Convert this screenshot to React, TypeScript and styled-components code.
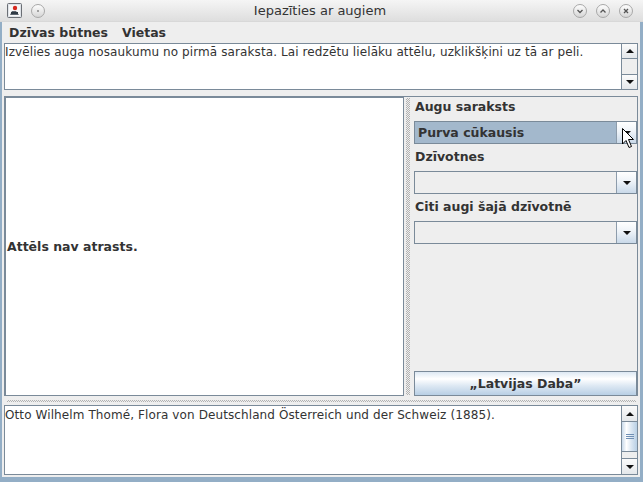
import React from "react";
import styled, { createGlobalStyle, css } from "styled-components";

const GlobalStyle = createGlobalStyle`
  html, body {
    margin: 0;
    padding: 0;
    background: #eeeeee;
  }
  body {
    font-family: "DejaVu Sans", "Liberation Sans", sans-serif;
    color: #333333;
  }
  * {
    box-sizing: border-box;
  }
`;

const Window = styled.div`
  position: relative;
  width: 643px;
  height: 482px;
  display: flex;
  flex-direction: column;
  overflow: hidden;
  background: #eeeeee;
`;

/* ---------- title bar ---------- */

const TitleBar = styled.div`
  flex: none;
  height: 22px;
  display: grid;
  grid-template-columns: 1fr auto 1fr;
  align-items: center;
  padding: 0 10px 0 7px;
  background: linear-gradient(#f5f5f5, #dedede);
  border-bottom: 1px solid #d8d8d8;
`;

const TitleGroup = styled.div<{ $end?: boolean }>`
  display: flex;
  align-items: center;
  gap: 9px;
  justify-content: ${(p) => (p.$end ? "flex-end" : "flex-start")};
`;

const Title = styled.div`
  font-size: 13px;
  color: #333333;
  white-space: nowrap;
`;

const RoundButton = styled.div`
  width: 14px;
  height: 14px;
  border-radius: 50%;
  border: 1px solid #a8a8a8;
  background: linear-gradient(#fdfdfd, #d6d6d6);
  display: grid;
  place-items: center;

  svg {
    display: block;
  }
`;

/* ---------- window body ---------- */

const Frame = styled.div`
  flex: 1;
  display: flex;
  flex-direction: column;
  padding: 0 2px 2px 2px;
  border-left: 2px solid #93aec6;
  border-right: 3px solid #93aec6;
  border-bottom: 5px solid #93aec6;
`;

const MenuBar = styled.div`
  flex: none;
  height: 21px;
  margin: 0 -2px;
  display: flex;
  align-items: center;
`;

const MenuItem = styled.div`
  padding: 0 7px;
  font-size: 12.5px;
  font-weight: bold;
  color: #333333;
`;

const ScrollPane = styled.div<{ $h: number; $gap?: number }>`
  flex: none;
  height: ${(p) => p.$h}px;
  margin-bottom: ${(p) => p.$gap ?? 0}px;
  display: flex;
  border: 1px solid #7a8a99;
  background: #ffffff;
`;

const TextArea = styled.div<{ $top: number }>`
  flex: 1;
  padding-top: ${(p) => p.$top}px;
  font-size: 12px;
  line-height: 15px;
  letter-spacing: 0.1px;
  color: #333333;
  white-space: nowrap;
  overflow: hidden;
`;

const ScrollBar = styled.div`
  width: 16px;
  display: flex;
  flex-direction: column;
  border-left: 1px solid #7a8a99;
  background: #eeeeee;
`;

const ArrowButton = styled.div<{ $h: number; $down?: boolean }>`
  flex: none;
  height: ${(p) => p.$h}px;
  display: grid;
  place-items: center;
  background: linear-gradient(#fbfbfb, #e4e7ea);
  ${(p) =>
    p.$down
      ? css`
          border-top: 1px solid #7a8a99;
        `
      : css`
          border-bottom: 1px solid #7a8a99;
        `}
`;

const Triangle = styled.span<{ $down?: boolean }>`
  width: 0;
  height: 0;
  border-left: 4px solid transparent;
  border-right: 4px solid transparent;
  ${(p) =>
    p.$down
      ? css`
          border-top: 4px solid #111111;
        `
      : css`
          border-bottom: 4px solid #111111;
        `}
`;

const Track = styled.div`
  flex: 1;
  background: #eeeeee;
`;

const Thumb = styled.div<{ $h: number }>`
  flex: none;
  height: ${(p) => p.$h}px;
  display: flex;
  flex-direction: column;
  align-items: center;
  justify-content: center;
  gap: 1px;
  border-bottom: 1px solid #7a8a99;
  background: linear-gradient(
    to right,
    #c8d9ea 0%,
    #ffffff 30%,
    #dde8f3 60%,
    #b8cfe5 100%
  );
`;

const Grip = styled.span`
  width: 8px;
  height: 1px;
  background: #6f8fb5;
`;

/* ---------- split panes ---------- */

const dots = css`
  background-image: conic-gradient(
    #b2b2b2 0 25%,
    transparent 0 50%,
    #b2b2b2 0 75%,
    transparent 0
  );
  background-size: 2px 2px;
`;

const SplitUpper = styled.div`
  flex: none;
  height: 300px;
  display: flex;
  border-top: 1px solid #7a8a99;
  border-left: 1px solid #7a8a99;
  border-right: 1px solid #7a8a99;
`;

const ImagePanel = styled.div`
  width: 399px;
  display: flex;
  align-items: center;
  padding-left: 1px;
  border: 1px solid #7a8a99;
  background: #ffffff;
  font-size: 12.5px;
  font-weight: bold;
  line-height: 15px;
  color: #333333;
`;

const VDivider = styled.div`
  width: 8px;
  display: flex;
  padding: 1px 2px 1px 2px;
`;

const VDots = styled.div`
  width: 4px;
  ${dots}
`;

const HDivider = styled.div`
  flex: none;
  height: 9px;
  padding: 4px 2px 0 3px;
`;

const HDots = styled.div`
  height: 2px;
  ${dots}
`;

const SidePanel = styled.div`
  flex: 1;
  display: flex;
  flex-direction: column;
  padding: 2px 0 0 2px;
`;

const FieldLabel = styled.div`
  height: 16px;
  margin-bottom: 6px;
  padding-left: 1px;
  font-size: 12.5px;
  font-weight: bold;
  line-height: 16px;
  color: #333333;
  white-space: nowrap;
`;

const Combo = styled.div`
  height: 23px;
  margin-bottom: 5px;
  display: flex;
  border: 1px solid #7a8a99;
  background: #eeeeee;
`;

const ComboValue = styled.div<{ $selected?: boolean }>`
  flex: 1;
  display: flex;
  align-items: center;
  padding-left: 3px;
  font-size: 12.5px;
  font-weight: bold;
  line-height: 15px;
  color: #333333;
  background: ${(p) => (p.$selected ? "#a3b8cc" : "#eeeeee")};
`;

const ComboArrow = styled.div`
  width: 20px;
  display: grid;
  place-items: center;
  border-left: 1px solid #8d9cab;
  background: linear-gradient(#ffffff, #eef3f8 45%, #c9d9e9);
`;

const ActionButton = styled.div`
  margin-top: auto;
  height: 25px;
  display: flex;
  align-items: center;
  justify-content: center;
  border: 1px solid #7a8a99;
  background: linear-gradient(
    #dde8f3 0%,
    #ffffff 30%,
    #dde8f3 60%,
    #b8cfe5 100%
  );
  font-size: 12.5px;
  font-weight: bold;
  color: #333333;
`;

const Pointer = styled.svg`
  position: absolute;
  left: 621px;
  top: 127px;
`;

/* ---------- small drawings ---------- */

const AppIcon = () => (
  <svg width="15" height="15" viewBox="0 0 15 15">
    <rect x="0.5" y="0.5" width="14" height="14" rx="1" fill="#dfe3e8" stroke="#6b6f75" />
    <rect x="2" y="2" width="11" height="11" fill="#f7f7f7" />
    <path d="M3 12 L5 8 L9 8 L12 12 Z" fill="#5d6670" />
    <rect x="4" y="9" width="7" height="2" fill="#2f3a44" />
    <circle cx="8" cy="5" r="2.2" fill="#d6281f" />
  </svg>
);

const Chevron = ({ up }: { up?: boolean }) => (
  <svg width="8" height="8" viewBox="0 0 8 8">
    <polyline
      points={up ? "1.5,5.5 4,3 6.5,5.5" : "1.5,3 4,5.5 6.5,3"}
      fill="none"
      stroke="#555"
      strokeWidth="1.3"
    />
  </svg>
);

const Cross = () => (
  <svg width="8" height="8" viewBox="0 0 8 8">
    <path d="M2 2 L6 6 M6 2 L2 6" stroke="#555" strokeWidth="1.3" />
  </svg>
);

const Dot = () => (
  <svg width="8" height="8" viewBox="0 0 8 8">
    <circle cx="4" cy="4" r="1" fill="#888" />
  </svg>
);

const VScroll = ({ buttons, thumb }: { buttons: number; thumb?: number }) => (
  <ScrollBar>
    <ArrowButton $h={buttons}>
      <Triangle />
    </ArrowButton>
    {thumb ? (
      <Thumb $h={thumb}>
        <Grip />
        <Grip />
        <Grip />
      </Thumb>
    ) : null}
    <Track />
    <ArrowButton $h={buttons} $down>
      <Triangle $down />
    </ArrowButton>
  </ScrollBar>
);

const Field = ({ label, value }: { label: string; value?: string }) => (
  <>
    <FieldLabel>{label}</FieldLabel>
    <Combo>
      <ComboValue $selected={!!value}>{value}</ComboValue>
      <ComboArrow>
        <Triangle $down />
      </ComboArrow>
    </Combo>
  </>
);

export default function App() {
  return (
    <Window>
      <GlobalStyle />
      <TitleBar>
        <TitleGroup>
          <AppIcon />
          <RoundButton>
            <Dot />
          </RoundButton>
        </TitleGroup>
        <Title>Iepazīties ar augiem</Title>
        <TitleGroup $end>
          <RoundButton>
            <Chevron />
          </RoundButton>
          <RoundButton>
            <Chevron up />
          </RoundButton>
          <RoundButton>
            <Cross />
          </RoundButton>
        </TitleGroup>
      </TitleBar>

      <Frame>
        <MenuBar>
          <MenuItem>Dzīvas būtnes</MenuItem>
          <MenuItem>Vietas</MenuItem>
        </MenuBar>

        <ScrollPane $h={47} $gap={6}>
          <TextArea $top={1}>
            Izvēlies auga nosaukumu no pirmā saraksta. Lai redzētu lielāku
            attēlu, uzklikšķini uz tā ar peli.
          </TextArea>
          <VScroll buttons={15} />
        </ScrollPane>

        <SplitUpper>
          <ImagePanel>Attēls nav atrasts.</ImagePanel>
          <VDivider>
            <VDots />
          </VDivider>
          <SidePanel>
            <Field label="Augu saraksts" value="Purva cūkausis" />
            <Field label="Dzīvotnes" />
            <Field label="Citi augi šajā dzīvotnē" />
            <ActionButton>„Latvijas Daba”</ActionButton>
          </SidePanel>
        </SplitUpper>

        <HDivider>
          <HDots />
        </HDivider>

        <ScrollPane $h={70}>
          <TextArea $top={2}>
            Otto Wilhelm Thomé, Flora von Deutschland Österreich und der Schweiz
            (1885).
          </TextArea>
          <VScroll buttons={16} thumb={30} />
        </ScrollPane>
      </Frame>

      <Pointer width="14" height="22" viewBox="0 0 14 22">
        <path
          d="M1.5 1.5 L1.5 17 L5 13.5 L8 20.5 L10.5 19.5 L7.5 12.5 L12.5 12.5 Z"
          fill="#ffffff"
          stroke="#000000"
          strokeWidth="1"
          strokeLinejoin="round"
        />
      </Pointer>
    </Window>
  );
}
